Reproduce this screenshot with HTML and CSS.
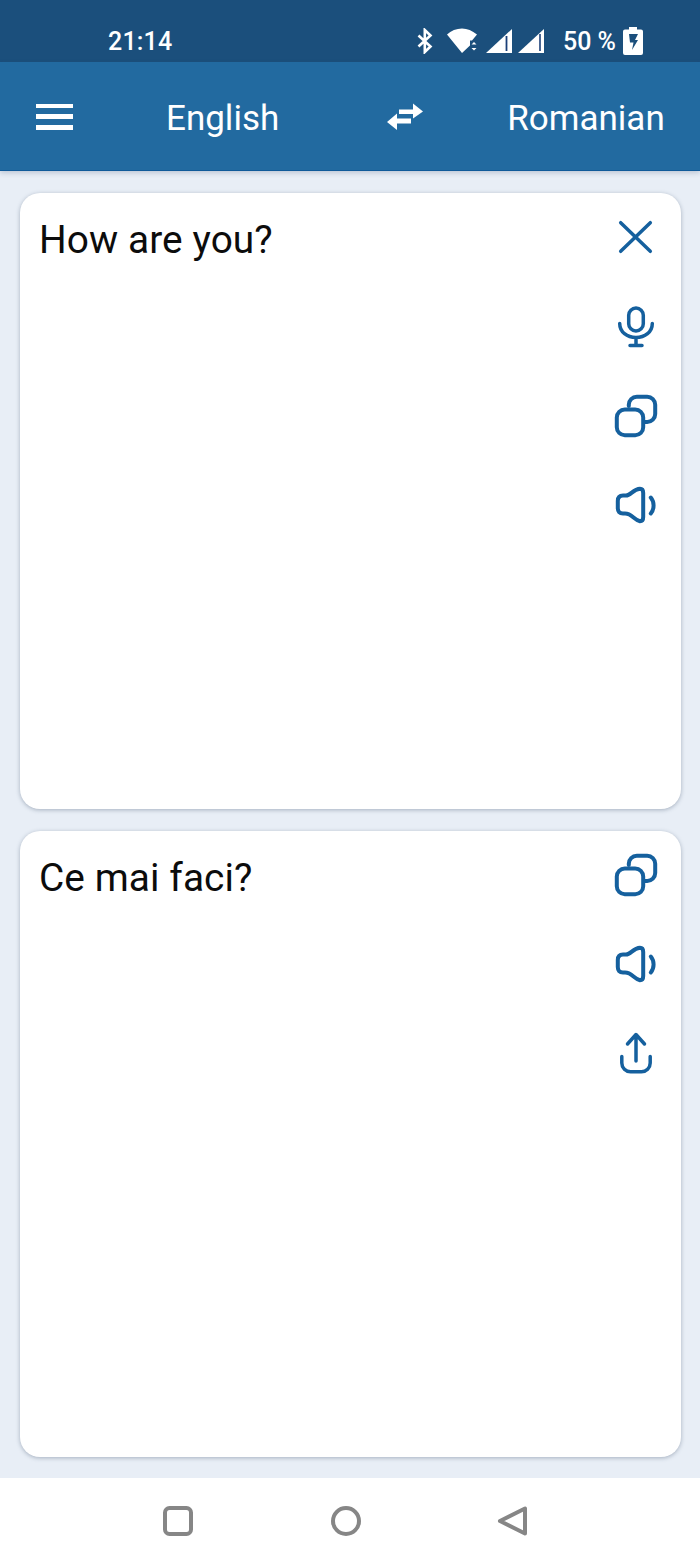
FILE: index.html
```html
<!DOCTYPE html>
<html lang="en">
<head>
<meta charset="utf-8">
<title>Translator</title>
<link rel="stylesheet" href="styles.css">
</head>
<body>
<div class="screen">
  <div class="status">
    <span class="clock">21:14</span>
    <div class="status-right">
      <svg class="st-bt" viewBox="0 0 18 26"><path d="M2.500 7.500 14.500 18.500 8.800 24V2L14.500 7.500 2.500 18.500" fill="none" stroke="#fff" stroke-width="2.600"/></svg>
      <svg class="st-wifi" viewBox="0 0 32 26"><path d="M0 6.500C4 2.500 9.500 .5 15 .5S25 2.500 30 6.500L25 12.500H23V17.500L15 25Z" fill="#fff"/><path d="M24.500 16.500 27 14l2.500 2.500ZM24.500 20 27 22.500 29.500 20Z" fill="#fff"/></svg>
      <svg class="st-sig" viewBox="0 0 28 26"><path d="M1 25 27 1V25Z" fill="#fff"/><path d="M21.500 8V23" stroke="#1b3f78" stroke-width="1.800"/></svg>
      <svg class="st-sig st-sig2" viewBox="0 0 28 26"><path d="M1 25 27 1V25Z" fill="#fff"/><path d="M23 6V23" stroke="#1b3f78" stroke-width="1.600"/></svg>
      <span class="pct">50 %</span>
      <svg class="st-bat" viewBox="0 0 20 28"><path d="M6 0h8v2.500h4a2 2 0 0 1 2 2V26a2 2 0 0 1-2 2H2a2 2 0 0 1-2-2V4.500a2 2 0 0 1 2-2h4Z" fill="#fff"/><path d="M6 7h9l-3 6h3l-6 10 1.500-7.500H7Z" fill="#1b4f7c"/></svg>
    </div>
  </div>
  <header class="appbar">
    <button class="menu" aria-label="Menu"><span></span><span></span><span></span></button>
    <div class="lang lang-from">English</div>
    <svg class="swap" viewBox="0 0 36 28"><path d="M12 7.500H26V1.500L36 9.500 26 16.500V12H12Z" fill="#fff" transform="translate(0 -1)"/><path d="M24 15.500H10V10.500L0 19 10 27V20.500H24Z" fill="#fff"/></svg>
    <div class="lang lang-to">Romanian</div>
  </header>
  <main class="content">
    <section class="card card-source">
      <p class="phrase">How are you?</p>
      <div class="actions">
        <svg class="ico" viewBox="0 0 44 44"><path d="M6.700 7.700 36.300 36.300M36.300 7.700 6.700 36.300"/></svg>
        <svg class="ico" viewBox="0 0 44 44"><rect x="14.700" y="3" width="14.600" height="23" rx="7.300"/><path d="M5.700 18.500C5.700 27 13 32.500 22 32.500S38.300 27 38.300 18.500M22 33V40.500M16 40.600H28"/></svg>
        <svg class="ico ico-bold" viewBox="0 0 44 44"><path d="M14.800 12V10.800A8 8 0 0 1 22.800 2.800H33.200A8 8 0 0 1 41.200 10.800V20A8 8 0 0 1 33.200 28H31"/><rect x="2.800" y="15.600" width="26.400" height="25.600" rx="8"/></svg>
        <svg class="ico ico-bold" viewBox="0 0 44 44"><path d="M9 11.500H12C17 11.500 19 5 26 4.800 28.500 4.800 29.200 7 29.200 9V33C29.200 36 28 37.200 26 37.200 20 36 18 29.500 11 29.500H9C5.500 29.500 3.800 27.500 3.800 24V17C3.800 13.500 5.500 11.500 9 11.500Z"/><path d="M36.800 13.500C40.500 18 40.500 25 36.800 29.500"/></svg>
      </div>
    </section>
    <section class="card card-target">
      <p class="phrase">Ce mai faci?</p>
      <div class="actions">
        <svg class="ico ico-bold" viewBox="0 0 44 44"><path d="M14.800 12V10.800A8 8 0 0 1 22.800 2.800H33.200A8 8 0 0 1 41.200 10.800V20A8 8 0 0 1 33.200 28H31"/><rect x="2.800" y="15.600" width="26.400" height="25.600" rx="8"/></svg>
        <svg class="ico ico-bold" viewBox="0 0 44 44"><path d="M9 11.500H12C17 11.500 19 5 26 4.800 28.500 4.800 29.200 7 29.200 9V33C29.200 36 28 37.200 26 37.200 20 36 18 29.500 11 29.500H9C5.500 29.500 3.800 27.500 3.800 24V17C3.800 13.500 5.500 11.500 9 11.500Z"/><path d="M36.800 13.500C40.500 18 40.500 25 36.800 29.500"/></svg>
        <svg class="ico" viewBox="0 0 44 44"><path d="M22 29V3M13.500 12 22 2.500 30.500 12M7.800 24.500V31A8.800 8.800 0 0 0 16.600 39.800H27.400A8.800 8.800 0 0 0 36.200 31V24.500"/></svg>
      </div>
    </section>
  </main>
  <nav class="navbar">
    <svg class="nav-ico" viewBox="0 0 32 32"><rect x="3" y="3" width="26" height="26" rx="4.500"/></svg>
    <svg class="nav-ico" viewBox="0 0 32 32"><circle cx="16" cy="16" r="13"/></svg>
    <svg class="nav-ico" viewBox="0 0 32 32"><path d="M28 3.500V28.500L3 16Z"/></svg>
  </nav>
</div>
</body>
</html>
```
FILE: styles.css
```css
* { box-sizing: border-box; }
html, body { margin: 0; padding: 0; }
body { font-family: Roboto, "Liberation Sans", sans-serif; background: #e8eef6; }
.screen { width: 700px; height: 1564px; display: flex; flex-direction: column; overflow: hidden; }
.status { height: 62px; flex: none; background: #1b4f7c; color: #fff; display: flex; align-items: center; justify-content: space-between; padding: 20px 57px 0 108px; }
.clock { font-size: 25px; font-weight: 500; letter-spacing: .2px; }
.status-right { display: flex; align-items: center; }
.st-bt { width: 18px; height: 26px; }
.st-wifi { width: 32px; height: 26px; margin-left: 13px; }
.st-sig { width: 28px; height: 26px; margin-left: 6px; }
.st-sig2 { margin-left: 4px; }
.pct { font-size: 25px; font-weight: 500; margin-left: 18px; }
.st-bat { width: 20px; height: 28px; margin-left: 7px; }
.appbar { height: 109px; flex: none; background: #226aa0; border-bottom: 1px solid #0f5a99; box-shadow: 0 2px 5px rgba(30,60,100,.22); display: flex; align-items: center; position: relative; color: #fff; z-index: 1; padding-top: 3px; }
.menu { width: 37px; height: 26px; margin: -2px 0 0 36px; padding: 0; border: 0; background: none; display: flex; flex-direction: column; justify-content: space-between; }
.menu span { display: block; height: 4.500px; background: #fff; }
.lang { font-size: 35px; line-height: 40px; margin-top: 2px; }
.lang-from { margin-left: 93px; }
.swap { width: 36px; height: 28px; margin: -1px 0 0 108px; }
.lang-to { margin-left: 84px; }
.content { flex: 1; padding: 22px 19px 21px 20px; display: flex; flex-direction: column; gap: 22px; }
.card { background: #fff; border-radius: 20px; box-shadow: 0 1px 4px rgba(40,60,90,.35); display: flex; justify-content: space-between; padding: 22px 23px 0 19px; }
.card-source { height: 616px; }
.card-target { height: 626px; }
.phrase { margin: 2px 0 0; font-size: 38.800px; line-height: 46px; letter-spacing: .1px; color: #0c0c0c; }
.actions { display: flex; flex-direction: column; gap: 45.700px; }
.ico { width: 44px; height: 44px; fill: none; stroke: #15609e; stroke-width: 3.500; stroke-linecap: round; stroke-linejoin: round; display: block; }
.ico-bold { stroke-width: 4; }
.navbar { height: 86px; flex: none; background: #fff; display: flex; align-items: center; padding: 0 171px 0 162px; justify-content: space-between; }
.nav-ico { width: 32px; height: 32px; fill: none; stroke: #868686; stroke-width: 4; stroke-linejoin: round; }
```
